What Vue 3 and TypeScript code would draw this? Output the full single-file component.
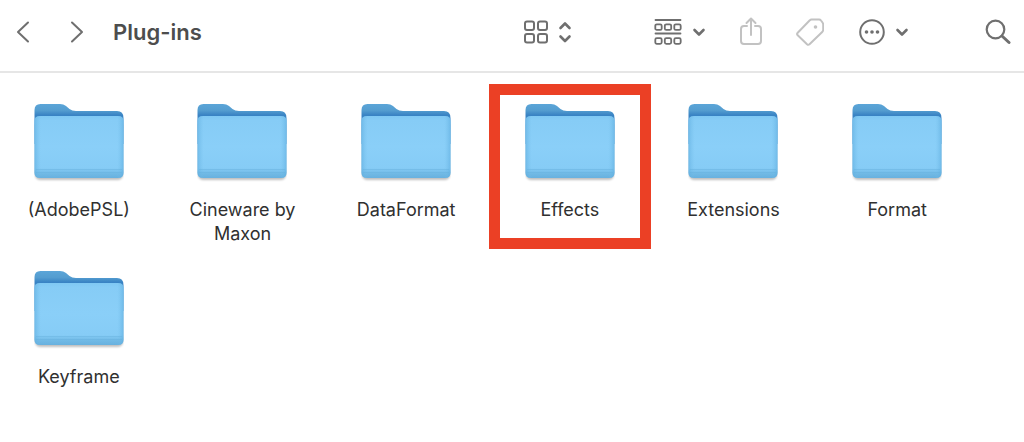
<script setup lang="ts">
interface Folder {
  name: string
  highlighted?: boolean
}

const folders: Folder[] = [
  { name: '(AdobePSL)' },
  { name: 'Cineware by Maxon' },
  { name: 'DataFormat' },
  { name: 'Effects', highlighted: true },
  { name: 'Extensions' },
  { name: 'Format' },
  { name: 'Keyframe' },
]
</script>

<template>
  <div class="window">
    <header class="toolbar">
      <nav class="history">
        <button type="button" aria-label="Back">
          <svg width="14" height="24" viewBox="0 0 14 24"><path d="M12 2.500 2 12 12 21.500" /></svg>
        </button>
        <button type="button" aria-label="Forward">
          <svg width="14" height="24" viewBox="0 0 14 24"><path d="M2 2.500 12 12 2 21.500" /></svg>
        </button>
      </nav>
      <h1>Plug-ins</h1>
      <div class="tools">
        <button type="button" class="view" aria-label="View as icons">
          <svg width="24" height="24" viewBox="0 0 24 24" class="medium">
            <rect x="1" y="1.500" width="9" height="8.500" rx="2" />
            <rect x="14" y="1.500" width="9" height="8.500" rx="2" />
            <rect x="1" y="14" width="9" height="8.500" rx="2" />
            <rect x="14" y="14" width="9" height="8.500" rx="2" />
          </svg>
          <svg width="14" height="22" viewBox="0 0 14 22" class="bold">
            <path d="M2.500 7 7 2.500 11.500 7M2.500 15.500l4.500 4.500 4.500-4.500" />
          </svg>
        </button>
        <button type="button" class="group" aria-label="Group items">
          <svg width="28" height="28" viewBox="0 0 28 28" class="fine">
            <path d="M1.500 2H26.500M1.500 15.500H26.500" />
            <rect x="1.300" y="6.300" width="6.400" height="5.600" rx="1.500" />
            <rect x="10.800" y="6.300" width="6.400" height="5.600" rx="1.500" />
            <rect x="20.300" y="6.300" width="6.400" height="5.600" rx="1.500" />
            <rect x="1.300" y="20.200" width="6.400" height="5.600" rx="1.500" />
            <rect x="10.800" y="20.200" width="6.400" height="5.600" rx="1.500" />
            <rect x="20.300" y="20.200" width="6.400" height="5.600" rx="1.500" />
          </svg>
          <svg width="14" height="10" viewBox="0 0 14 10" class="bold"><path d="M2.500 3l4.500 4.500 4.500-4.500" /></svg>
        </button>
        <button type="button" class="share" aria-label="Share" disabled>
          <svg width="22" height="30" viewBox="0 0 22 30">
            <path d="M7 9H4Q1 9 1 12V24Q1 27 4 27H18Q21 27 21 24V12Q21 9 18 9H15M11 18V1.500M6.500 6 11 1.500l4.500 4.500" />
          </svg>
        </button>
        <button type="button" class="tag" aria-label="Edit tags" disabled>
          <svg width="28" height="28" viewBox="0 0 28 28">
            <path d="M15.500 1.500H23Q24.300 1.500 25 2.500L26.500 4.500Q27.200 5.500 27.200 6.500V12Q27.200 13 26.200 14L13.500 26.300Q12.300 27.300 11 26.200L1.700 17.200Q.5 16 1.700 14.800L13.800 2.300Q14.500 1.500 15.500 1.500Z" />
            <circle cx="19.500" cy="9" r="1.800" class="dot" />
          </svg>
        </button>
        <button type="button" class="more" aria-label="More actions">
          <svg width="26" height="26" viewBox="0 0 26 26" class="medium">
            <circle cx="13" cy="13" r="11.800" />
            <g class="dot">
              <circle cx="7.500" cy="13" r="1.800" />
              <circle cx="13" cy="13" r="1.800" />
              <circle cx="18.500" cy="13" r="1.800" />
            </g>
          </svg>
          <svg width="14" height="10" viewBox="0 0 14 10" class="bold"><path d="M2.500 3l4.500 4.500 4.500-4.500" /></svg>
        </button>
        <button type="button" class="search" aria-label="Search">
          <svg width="26" height="26" viewBox="0 0 26 26">
            <circle cx="10.500" cy="10.500" r="8.800" class="lens" />
            <path d="M17 17l7 6.500" class="handle" />
          </svg>
        </button>
      </div>
    </header>

    <svg class="defs" width="0" height="0" aria-hidden="true">
      <defs>
        <linearGradient id="back" x1="0" y1="0" x2="0" y2="1">
          <stop offset="0" stop-color="#5ba5d8" />
          <stop offset=".16" stop-color="#549dd0" />
          <stop offset=".28" stop-color="#3983c4" />
          <stop offset="1" stop-color="#4a94cd" />
        </linearGradient>
        <linearGradient id="front" x1="0" y1="0" x2="0" y2="1">
          <stop offset="0" stop-color="#7fc8f3" />
          <stop offset=".07" stop-color="#86ccf6" />
          <stop offset=".5" stop-color="#8acff8" />
          <stop offset=".84" stop-color="#86ccf6" />
          <stop offset=".93" stop-color="#70b9e5" />
          <stop offset="1" stop-color="#68b1df" />
        </linearGradient>
        <linearGradient id="sides">
          <stop offset="0" stop-color="#5eaddf" stop-opacity=".6" />
          <stop offset=".07" stop-color="#75bee9" stop-opacity="0" />
          <stop offset=".93" stop-color="#75bee9" stop-opacity="0" />
          <stop offset="1" stop-color="#5eaddf" stop-opacity=".6" />
        </linearGradient>
      </defs>
    </svg>

    <main>
      <ul class="folders">
        <li v-for="folder in folders" :key="folder.name" :class="{ highlighted: folder.highlighted }">
          <button type="button" class="folder">
            <svg width="90" height="78" viewBox="0 0 90 78" aria-hidden="true">
              <path class="shadow" d="M1 20H89V70Q89 76 83 76H7Q1 76 1 70Z" />
              <path fill="url(#back)" d="M.5 6Q.5 0 6.500 0H26Q29.500 0 32 2L35.500 5Q38 7 42 7H83Q89.500 7 89.500 14V40H.5Z" />
              <path fill="url(#front)" d="M.5 17Q.5 12 6 12H84Q89.500 12 89.500 17V68.500Q89.500 74 84 74H6Q.5 74 .5 68.500Z" />
              <path fill="url(#sides)" d="M.5 17Q.5 12 6 12H84Q89.500 12 89.500 17V68.500Q89.500 74 84 74H6Q.5 74 .5 68.500Z" />
              <path class="crease" d="M2 65.500H88M2 68.500H88" />
            </svg>
            <span>{{ folder.name }}</span>
          </button>
        </li>
      </ul>
    </main>
  </div>
</template>

<style>
body {
  margin: 0;
  background: #fff;
}
</style>

<style scoped>
.window {
  font-family: Inter, "Liberation Sans", sans-serif;
  color: #303030;
  background: #fff;
}

.toolbar {
  display: flex;
  align-items: center;
  box-sizing: border-box;
  height: 73px;
  padding: 0 13px 8px 16px;
  border-bottom: 2px solid #e6e6e6;
}

button {
  display: flex;
  align-items: center;
  padding: 0;
  border: 0;
  background: none;
  color: #6f6f6f;
  font: inherit;
}

button:disabled {
  color: #c2c2c2;
}

.toolbar svg {
  display: block;
  fill: none;
  stroke: currentColor;
  stroke-width: 2;
  stroke-linecap: round;
  stroke-linejoin: round;
}

.toolbar .fine {
  stroke-width: 1.8;
}

.toolbar .bold {
  stroke-width: 2.6;
}

.toolbar .dot {
  fill: currentColor;
  stroke: none;
}

.toolbar .lens {
  stroke-width: 2.2;
}

.toolbar .handle {
  stroke-width: 3;
}

.history {
  display: flex;
  gap: 40px;
}

h1 {
  margin: 0 0 0 29px;
  font-size: 22px;
  line-height: 28px;
  font-weight: 600;
  color: #4d4d4d;
}

.tools {
  display: flex;
  align-items: center;
  gap: 34px;
  margin-left: auto;
}

.view,
.group,
.more {
  gap: 10px;
}

.view {
  margin-right: 48px;
}

.more {
  margin-left: 1px;
}

.search {
  margin-left: 42px;
}

.defs {
  position: absolute;
}

.folders {
  display: grid;
  grid-template-columns: repeat(6, 1fr);
  grid-auto-rows: minmax(142px, auto);
  gap: 25px 20px;
  margin: 0;
  padding: 31px 55px 20px 7px;
  list-style: none;
}

.folders li {
  position: relative;
}

.highlighted::after {
  content: "";
  position: absolute;
  inset: -20px -9px -3px;
  border: 11px solid #eb4025;
  pointer-events: none;
}

.folder {
  flex-direction: column;
  gap: 16px;
  width: 100%;
  color: #303030;
  font-size: 18px;
  line-height: 24px;
}

.folder span {
  max-width: 120px;
  text-align: center;
}

.shadow {
  fill: #000;
  opacity: 0.25;
  filter: blur(1px);
}

.crease {
  fill: none;
  stroke: #65afdc;
  stroke-width: 1;
  opacity: 0.4;
}
</style>
